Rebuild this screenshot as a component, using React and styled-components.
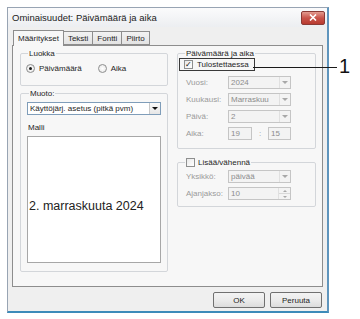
import React from "react";
import styled, { createGlobalStyle } from "styled-components";

const GlobalStyle = createGlobalStyle`
  html, body {
    margin: 0;
    padding: 0;
    background: #ffffff;
  }
  body {
    font-family: "Liberation Sans", Arial, sans-serif;
    color: #1e1e1e;
  }
`;

const Page = styled.div`
  position: relative;
  width: 360px;
  height: 319px;
  padding: 7px 0 0 7px;
  box-sizing: border-box;
`;

const Window = styled.div`
  width: 322px;
  height: 306px;
  box-sizing: border-box;
  display: flex;
  flex-direction: column;
  background: #efefef;
  border: 1px solid #98a4b3;
  border-right: 2px solid #5f95bd;
  border-bottom: 2px solid #3d8bb9;
`;

const TitleBar = styled.div`
  height: 19px;
  display: flex;
  align-items: center;
  justify-content: space-between;
  padding: 0 2px 0 4px;
  background: linear-gradient(#fbfbfc, #eceef1);
  font-size: 9.5px;
  color: #222;
`;

const CloseButton = styled.div`
  width: 22px;
  height: 12px;
  border-radius: 2px;
  border: 1px solid #8a3a35;
  background: linear-gradient(#e39b8f, #c9544a 50%, #b83a30);
  display: flex;
  align-items: center;
  justify-content: center;
`;

const Body = styled.div`
  flex: 1;
  display: flex;
  flex-direction: column;
  padding: 2px 4px 0 4px;
`;

const TabRow = styled.div`
  display: flex;
  align-items: flex-end;
  height: 16px;
  padding-left: 1px;
`;

const Tab = styled.div`
  height: ${(p) => (p.$active ? "16px" : "14px")};
  box-sizing: border-box;
  padding: 0 4px;
  display: flex;
  align-items: center;
  font-size: 8px;
  border: 1px solid #8d8d8d;
  border-bottom: ${(p) => (p.$active ? "none" : "1px solid #8d8d8d")};
  margin-left: ${(p) => (p.$first ? "0" : "-1px")};
  background: ${(p) => (p.$active ? "#f7f7f7" : "linear-gradient(#f2f2f2, #e3e3e3)")};
  position: relative;
  z-index: ${(p) => (p.$active ? 1 : 0)};
  margin-bottom: ${(p) => (p.$active ? "-1px" : "0")};
`;

const Panel = styled.div`
  height: 242px;
  box-sizing: border-box;
  border: 1px solid #8d8d8d;
  background: #f7f7f7;
  display: flex;
  gap: 9px;
  padding: 3px 6px 0 7px;
`;

const Column = styled.div`
  width: ${(p) => p.$w}px;
  display: flex;
  flex-direction: column;
  gap: ${(p) => p.$gap || 0}px;
`;

const Group = styled.fieldset`
  margin: 0;
  padding: ${(p) => p.$pad || "0 5px"};
  height: ${(p) => p.$h}px;
  box-sizing: border-box;
  border: 1px solid #d3d6da;
  border-radius: 2px;
  min-width: 0;
`;

const Legend = styled.legend`
  font-size: 8px;
  padding: 0 1px;
  margin-left: 2px;
  color: #1e1e1e;
  display: flex;
  align-items: center;
  gap: 3px;
`;

const RadioRow = styled.div`
  display: flex;
  align-items: center;
  gap: 16px;
  margin-top: 6px;
  font-size: 8px;
`;

const RadioItem = styled.label`
  display: flex;
  align-items: center;
  gap: 4px;
`;

const Radio = styled.span`
  width: 9px;
  height: 9px;
  box-sizing: border-box;
  border-radius: 50%;
  border: 1px solid #8e8f8f;
  background: radial-gradient(circle, #ffffff, #e4e4e4);
  display: flex;
  align-items: center;
  justify-content: center;
  &::after {
    content: "";
    width: 3px;
    height: 3px;
    border-radius: 50%;
    background: ${(p) => (p.$checked ? "#1b1b1b" : "transparent")};
  }
`;

const Select = styled.div`
  width: ${(p) => p.$w}px;
  height: ${(p) => p.$h || 13}px;
  box-sizing: border-box;
  display: flex;
  align-items: center;
  justify-content: space-between;
  border: 1px solid ${(p) => (p.$disabled ? "#c5c5c5" : "#7f9db9")};
  background: ${(p) => (p.$disabled ? "#f3f3f3" : "#ffffff")};
  color: ${(p) => (p.$disabled ? "#8c8c8c" : "#1e1e1e")};
  font-size: 8px;
  padding-left: 2px;
  margin-top: ${(p) => p.$mt || 0}px;
`;

const ArrowBox = styled.span`
  width: 11px;
  height: 100%;
  box-sizing: border-box;
  display: flex;
  align-items: center;
  justify-content: center;
  border-left: 1px solid ${(p) => (p.$disabled ? "#e0e0e0" : "#c8c8c8")};
  background: ${(p) => (p.$disabled ? "#f3f3f3" : "linear-gradient(#fafafa, #e6e6e6)")};
  &::after {
    content: "";
    border-left: 3px solid transparent;
    border-right: 3px solid transparent;
    border-top: 3px solid ${(p) => (p.$disabled ? "#a8a8a8" : "#111")};
  }
`;

const SpinBox = styled.span`
  width: 11px;
  height: 100%;
  display: flex;
  flex-direction: column;
  border-left: 1px solid #e0e0e0;
`;

const SpinHalf = styled.span`
  flex: 1;
  display: flex;
  align-items: center;
  justify-content: center;
  border-bottom: ${(p) => (p.$top ? "1px solid #d8d8d8" : "none")};
  &::after {
    content: "";
    border-left: 2px solid transparent;
    border-right: 2px solid transparent;
    ${(p) => (p.$top ? "border-bottom: 2px solid #a8a8a8;" : "border-top: 2px solid #a8a8a8;")}
  }
`;

const SmallLabel = styled.div`
  font-size: 8px;
  margin: ${(p) => p.$m || "0"};
`;

const Preview = styled.div`
  height: 127px;
  box-sizing: border-box;
  margin-top: 4px;
  border: 1px solid #a7a7a7;
  background: #ffffff;
  display: flex;
  align-items: center;
  padding: 12px 0 0 1px;
  font-size: 12.5px;
  color: #222;
  white-space: nowrap;
`;

const CheckFrame = styled.div`
  width: 76px;
  height: 13px;
  box-sizing: border-box;
  border: 1px solid #3a3a3a;
  display: flex;
  align-items: center;
  gap: 4px;
  padding-left: 4px;
  font-size: 8px;
  margin-left: -4px;
`;

const Checkbox = styled.span`
  width: 9px;
  height: 9px;
  box-sizing: border-box;
  border: 1px solid #8e8f8f;
  background: linear-gradient(135deg, #e9e9e9, #ffffff);
  display: flex;
  align-items: center;
  justify-content: center;
  font-size: 8px;
  line-height: 1;
  color: #111;
`;

const FieldRow = styled.div`
  display: flex;
  align-items: center;
  height: 13px;
  margin-top: ${(p) => p.$mt || 4}px;
`;

const FieldLabel = styled.span`
  width: 42px;
  padding-left: 3px;
  font-size: 8px;
  color: #9a9a9a;
`;

const TimeSep = styled.span`
  width: 16px;
  text-align: center;
  font-size: 8px;
  color: #9a9a9a;
`;

const Footer = styled.div`
  display: flex;
  justify-content: flex-end;
  gap: 5px;
  padding: 5px 1px 0 0;
`;

const Button = styled.div`
  width: 52px;
  height: 16px;
  box-sizing: border-box;
  border: 1px solid #707070;
  border-radius: 2px;
  background: linear-gradient(#f3f3f3, #ebebeb 50%, #dcdcdc);
  display: flex;
  align-items: center;
  justify-content: center;
  font-size: 8px;
`;

const CalloutLine = styled.div`
  position: absolute;
  left: 253px;
  top: 67px;
  width: 84px;
  height: 1px;
  background: #1a1a1a;
`;

const CalloutNumber = styled.div`
  position: absolute;
  left: 339px;
  top: 55px;
  font-size: 20px;
  color: #111;
`;

const DateTimeFields = () => (
  <>
    <FieldRow $mt={5}>
      <FieldLabel>Vuosi:</FieldLabel>
      <Select $w={63} $disabled>
        2024
        <ArrowBox $disabled />
      </Select>
    </FieldRow>
    <FieldRow>
      <FieldLabel>Kuukausi:</FieldLabel>
      <Select $w={63} $disabled>
        Marraskuu
        <ArrowBox $disabled />
      </Select>
    </FieldRow>
    <FieldRow>
      <FieldLabel>Päivä:</FieldLabel>
      <Select $w={63} $disabled>
        2
        <ArrowBox $disabled />
      </Select>
    </FieldRow>
    <FieldRow>
      <FieldLabel>Aika:</FieldLabel>
      <Select $w={24} $disabled>
        19
      </Select>
      <TimeSep>:</TimeSep>
      <Select $w={23} $disabled>
        15
      </Select>
    </FieldRow>
  </>
);

export default function App() {
  return (
    <Page>
      <GlobalStyle />
      <Window>
        <TitleBar>
          <span>Ominaisuudet: Päivämäärä ja aika</span>
          <CloseButton>
            <svg width="8" height="7" viewBox="0 0 8 7">
              <path d="M1 0.5 L7 6.5 M7 0.5 L1 6.5" stroke="#fff" strokeWidth="1.6" />
            </svg>
          </CloseButton>
        </TitleBar>
        <Body>
          <TabRow>
            <Tab $active $first>Määritykset</Tab>
            <Tab>Teksti</Tab>
            <Tab>Fontti</Tab>
            <Tab>Piirto</Tab>
          </TabRow>
          <Panel>
            <Column $w={148} $gap={3}>
              <Group $h={37}>
                <Legend>Luokka</Legend>
                <RadioRow>
                  <RadioItem>
                    <Radio $checked />
                    Päivämäärä
                  </RadioItem>
                  <RadioItem>
                    <Radio />
                    Aika
                  </RadioItem>
                </RadioRow>
              </Group>
              <Group $h={183} $pad="0 6px">
                <Legend>Muoto:</Legend>
                <Select $w={134} $h={13} $mt={4}>
                  Käyttöjärj. asetus (pitkä pvm)
                  <ArrowBox />
                </Select>
                <SmallLabel $m="8px 0 0 1px">Malli</SmallLabel>
                <Preview>2. marraskuuta 2024</Preview>
              </Group>
            </Column>
            <Column $w={139} $gap={9}>
              <Group $h={100}>
                <Legend>Päivämäärä ja aika</Legend>
                <CheckFrame>
                  <Checkbox>✓</Checkbox>
                  Tulostettaessa
                </CheckFrame>
                <DateTimeFields />
              </Group>
              <Group $h={49}>
                <Legend>
                  <Checkbox />
                  Lisää/vähennä
                </Legend>
                <FieldRow $mt={3}>
                  <FieldLabel>Yksikkö:</FieldLabel>
                  <Select $w={63} $disabled>
                    päivää
                    <ArrowBox $disabled />
                  </Select>
                </FieldRow>
                <FieldRow $mt={4}>
                  <FieldLabel>Ajanjakso:</FieldLabel>
                  <Select $w={63} $disabled>
                    10
                    <SpinBox>
                      <SpinHalf $top />
                      <SpinHalf />
                    </SpinBox>
                  </Select>
                </FieldRow>
              </Group>
            </Column>
          </Panel>
          <Footer>
            <Button>OK</Button>
            <Button>Peruuta</Button>
          </Footer>
        </Body>
      </Window>
      <CalloutLine />
      <CalloutNumber>1</CalloutNumber>
    </Page>
  );
}
